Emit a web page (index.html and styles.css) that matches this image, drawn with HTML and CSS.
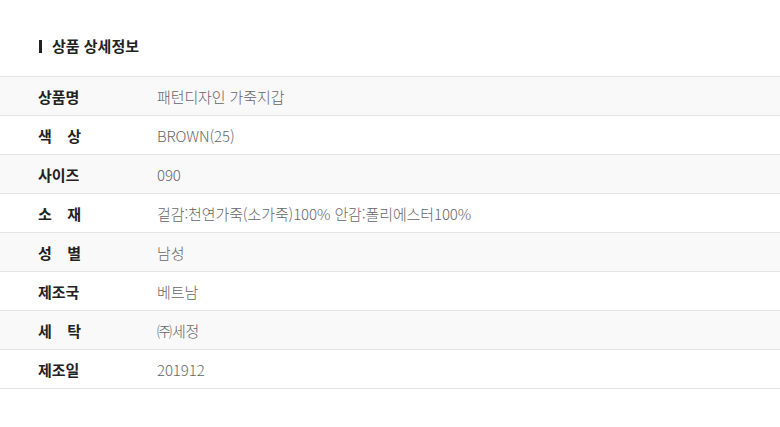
FILE: index.html
```html
<!DOCTYPE html>
<html lang="ko">
<head>
<meta charset="utf-8">
<link rel="stylesheet" href="styles.css">
</head>
<body>
<section class="detail">
  <h2 class="title">상품 상세정보</h2>
  <table class="spec">
    <tbody>
      <tr class="alt"><th><span class="lbl">상품명</span></th><td>패턴디자인 가죽지갑</td></tr>
      <tr><th><span class="lbl">색 상</span></th><td>BROWN(25)</td></tr>
      <tr class="alt"><th><span class="lbl">사이즈</span></th><td>090</td></tr>
      <tr><th><span class="lbl">소 재</span></th><td>겉감:천연가죽(소가죽)100% 안감:폴리에스터100%</td></tr>
      <tr class="alt"><th><span class="lbl">성 별</span></th><td>남성</td></tr>
      <tr><th><span class="lbl">제조국</span></th><td>베트남</td></tr>
      <tr class="alt"><th><span class="lbl">세 탁</span></th><td>㈜세정</td></tr>
      <tr><th><span class="lbl">제조일</span></th><td>201912</td></tr>
    </tbody>
  </table>
</section>
</body>
</html>
```

FILE: styles.css
```css
html, body {
  margin: 0;
  padding: 0;
  background: #fff;
}
body {
  font-family: "Noto Sans CJK KR", "Noto Sans", sans-serif;
  color: #222;
}
.detail {
  padding-top: 35px;
}
.title {
  margin: 0 0 19px 39px;
  padding-left: 13px;
  position: relative;
  font-size: 15px;
  font-weight: 700;
  line-height: 22px;
  color: #222;
}
.title::before {
  content: "";
  position: absolute;
  left: 0;
  top: 5px;
  width: 3px;
  height: 13px;
  background: #222;
}
.spec {
  width: 100%;
  border-collapse: collapse;
  border-top: 1px solid #e4e4e4;
}
.spec tr {
  height: 39px;
  border-bottom: 1px solid #e4e4e4;
}
.spec tr.alt {
  background: #f9f9f9;
}
.spec th {
  width: 119px;
  padding: 0 0 0 38px;
  text-align: left;
  vertical-align: middle;
  font-size: 15px;
  font-weight: 700;
  color: #222;
}
.lbl {
  display: inline-block;
  width: 43px;
  text-align: justify;
  text-align-last: justify;
}
.spec td {
  padding: 0;
  vertical-align: middle;
  font-size: 15px;
  font-weight: 300;
  color: #666;
  letter-spacing: -0.1px;
}
```
